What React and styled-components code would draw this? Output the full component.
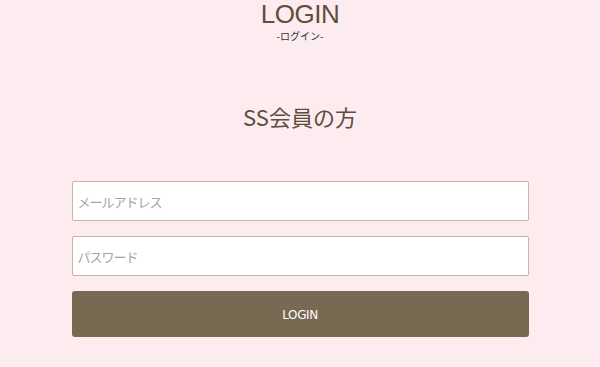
import React from "react";
import styled, { createGlobalStyle } from "styled-components";

const Global = createGlobalStyle`
  html, body { margin: 0; padding: 0; background: #fcebef; }
  body { font-family: "Noto Sans CJK JP", "Noto Sans", sans-serif; }
  * { box-sizing: border-box; }
`;

const Page = styled.div`
  width: 600px;
  height: 367px;
  background: #fcebef;
  display: flex;
  flex-direction: column;
  align-items: center;
  overflow: hidden;
`;

const Heading = styled.div`
  display: flex;
  flex-direction: column;
  align-items: center;
`;

const Title = styled.h1`
  margin: 0;
  font-family: "Liberation Sans", "Noto Sans", sans-serif;
  font-weight: 400;
  font-size: 26px;
  line-height: 29px;
  letter-spacing: -0.5px;
  color: #5e4e3e;
`;

const Sub = styled.span`
  margin-top: 2px;
  font-size: 10px;
  line-height: 10px;
  color: #333;
`;

const Section = styled.h2`
  margin: 61px 0 0;
  font-weight: 400;
  font-size: 22px;
  line-height: 28px;
  color: #5e4e3e;
`;

const Form = styled.form`
  width: 457px;
  margin-top: 51px;
  display: flex;
  flex-direction: column;
  gap: 15px;
`;

const Input = styled.input`
  width: 100%;
  height: 40px;
  border: 1px solid #c8b4a0;
  border-radius: 2px;
  background: #fff;
  padding: 0 5px;
  font-family: "Noto Sans CJK JP", sans-serif;
  font-size: 13px;
  letter-spacing: -1px;
  outline: none;
  &::placeholder { color: #a4a4a8; }
`;

const Button = styled.button`
  width: 100%;
  height: 46px;
  border: none;
  border-radius: 3px;
  padding-top: 3px;
  background: #786953;
  color: #fff;
  font-family: "DejaVu Sans", "Liberation Sans", sans-serif;
  font-size: 12px;
  letter-spacing: -0.4px;
  cursor: pointer;
`;

export default function App() {
  return (
    <>
      <Global />
      <Page>
        <Heading>
          <Title>LOGIN</Title>
          <Sub>-ログイン-</Sub>
        </Heading>
        <Section>SS会員の方</Section>
        <Form onSubmit={(e) => e.preventDefault()}>
          <Input type="email" placeholder="メールアドレス" />
          <Input type="password" placeholder="パスワード" />
          <Button type="submit">LOGIN</Button>
        </Form>
      </Page>
    </>
  );
}
